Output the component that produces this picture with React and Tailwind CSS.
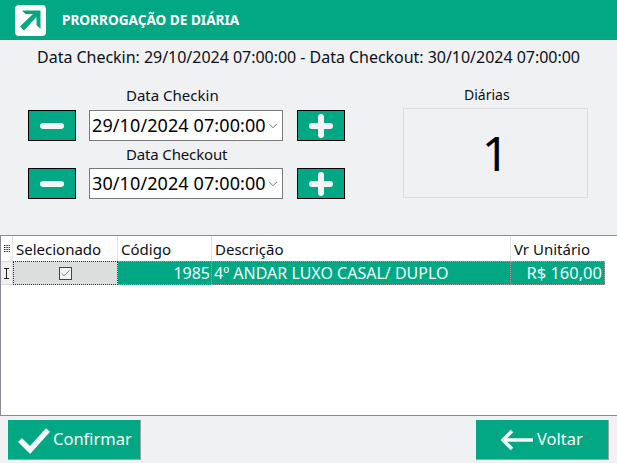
import { Check, ChevronDown } from 'lucide-react';

const GREEN = 'bg-[#02a884]';

function StepButton({ plus }) {
  return (
    <button className={`${GREEN} w-[48px] h-[31px] border border-black flex items-center justify-center`}>
      <svg width="26" height="26" viewBox="0 0 26 26">
        <line x1="4" y1="13" x2="22" y2="13" stroke="#f4f4f4" strokeWidth="6" strokeLinecap="round" />
        {plus && <line x1="13" y1="4" x2="13" y2="22" stroke="#f4f4f4" strokeWidth="6" strokeLinecap="round" />}
      </svg>
    </button>
  );
}

function DateRow({ value }) {
  return (
    <div className="flex items-center">
      <StepButton />
      <div className="ml-[13px] mr-[14px] w-[194px] h-[31px] bg-white border border-[#7a7a7a] flex items-center pl-[2px] text-[18px] text-black whitespace-nowrap">
        <span className="tracking-[0.1px]">{value}</span>
        <ChevronDown className="w-[14px] h-[14px] text-[#666]" strokeWidth={1.5} />
      </div>
      <StepButton plus />
    </div>
  );
}

function FooterButton({ children, label, className }) {
  return (
    <button className={`${GREEN} w-[133px] h-[40px] border-r border-b border-[#a3a3a3] flex items-center text-[#f7fffc] text-[16.5px] ${className}`}>
      {children}
      <span>{label}</span>
    </button>
  );
}

export default function App() {
  return (
    <div className="w-[617px] h-[463px] bg-[#f0f1f3] flex flex-col overflow-hidden text-[#0b1020]" style={{ fontFamily: '"Noto Sans", sans-serif' }}>
      <header className={`${GREEN} h-[40px] flex items-center pl-[15px] shrink-0`}>
        <svg width="31" height="31" viewBox="0 0 31 31">
          <rect x="0" y="0" width="31" height="31" rx="4" fill="#fff" />
          <path d="M7 5.5 H25.5 V24 L21.5 20 V12 L9 25.5 L5 21.5 L18 9 H10.5 Z" fill="#02a884" />
        </svg>
        <span className="ml-[16px] text-white text-[13.6px] font-bold">PRORROGAÇÃO DE DIÁRIA</span>
      </header>

      <p className="text-center text-[16px] tracking-[-0.03px] mt-[6px] leading-[22px]">Data Checkin: 29/10/2024 07:00:00 - Data Checkout: 30/10/2024 07:00:00</p>

      <section className="flex mt-[16px] pl-[28px] h-[125px] shrink-0">
        <div className="w-[317px] flex flex-col">
          <span className="text-[15px] leading-[22px] pl-[98px] mb-[4px]">Data Checkin</span>
          <DateRow value="29/10/2024 07:00:00" />
          <span className="text-[15px] leading-[22px] pl-[98px] mt-[2px] mb-[3px] tracking-[-0.15px]">Data Checkout</span>
          <DateRow value="30/10/2024 07:00:00" />
        </div>
        <div className="ml-[58px] w-[185px] flex flex-col">
          <span className="text-[14px] leading-[22px] pl-[61px] mb-[2px]">Diárias</span>
          <div className="w-full h-[90px] border border-[#dcdddf] flex items-center justify-center text-[48px] text-black">1</div>
        </div>
      </section>

      <section className="mt-[26px] h-[181px] bg-white border border-[#8a8a94] border-r-0 text-[15px] shrink-0">
        <div className="flex h-[25px] leading-[26px]">
          <div className="w-[12px] border-r border-[#e4e4e4] flex items-center justify-center">
            <svg width="8" height="10" viewBox="0 0 8 10" stroke="#222" strokeWidth="1">
              <path d="M1 1.5 H7 M1 3.5 H7 M1 5.5 H7 M1 7.5 H7" strokeDasharray="1 0.6" />
            </svg>
          </div>
          <div className="w-[105px] border-r border-[#e4e4e4] pl-[3px]">Selecionado</div>
          <div className="w-[94px] border-r border-[#e4e4e4] pl-[3px]">Código</div>
          <div className="w-[299px] border-r border-[#e4e4e4] pl-[3px]">Descrição</div>
          <div className="w-[94px] pl-[3px]">Vr Unitário</div>
        </div>
        <div className="flex h-[24px] leading-[22px] text-[16px]">
          <div className="w-[12px] border-y border-r border-[#d9d9d9] bg-[#f0f0f0] flex items-center justify-center">
            <svg width="7" height="11" viewBox="0 0 7 11" fill="none" stroke="#222" strokeWidth="1">
              <path d="M1 0.5 H6 M1 10.5 H6 M3.5 0.5 V10.5" />
            </svg>
          </div>
          <div className="w-[105px] bg-[#dcdedd] border border-dotted border-[#333] flex items-center justify-center pr-[1px]">
            <span className="w-[13px] h-[13px] border border-[#444] bg-[#f4f4f4] flex items-center justify-center">
              <Check className="w-[11px] h-[11px] text-[#444]" strokeWidth={1.5} />
            </span>
          </div>
          <div className={`${GREEN} text-[#f2fffb] w-[94px] border-y border-r border-dotted border-[#a09a9a] text-right pr-[1px]`}>1985</div>
          <div className={`${GREEN} text-[#f2fffb] w-[299px] border-y border-r border-dotted border-[#a09a9a] pl-[2px]`}>4º ANDAR LUXO CASAL/ DUPLO</div>
          <div className={`${GREEN} text-[#f2fffb] w-[94px] border-y border-r border-dotted border-[#a09a9a] text-right pr-[2px] text-[16.5px]`}>R$ 160,00</div>
        </div>
      </section>

      <footer className="flex justify-between pl-[8px] pr-[8px] mt-[4px]">
        <FooterButton label="Confirmar" className="pl-[9px]">
          <svg width="34" height="28" viewBox="0 0 34 28" className="mr-[2px]">
            <path d="M3 14 L13 24 L31 4" fill="none" stroke="#f6f6f6" strokeWidth="5.5" />
          </svg>
        </FooterButton>
        <FooterButton label="Voltar" className="pl-[25px]">
          <svg width="32" height="24" viewBox="0 0 32 24" className="mr-[4px]">
            <path d="M32 12 H2 M11 3 L2 12 L11 21" fill="none" stroke="#f6f6f6" strokeWidth="3.5" />
          </svg>
        </FooterButton>
      </footer>
    </div>
  );
}
